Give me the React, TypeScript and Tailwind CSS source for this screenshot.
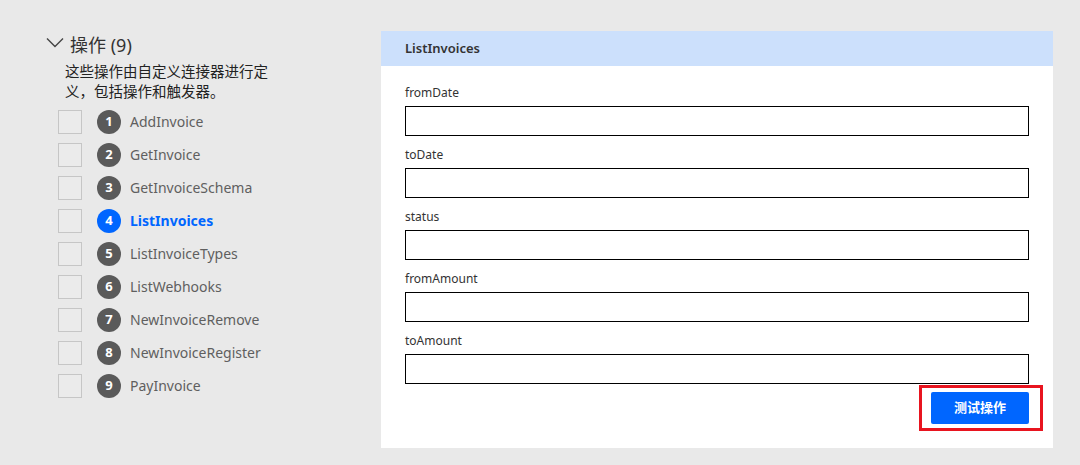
import React from "react";

const items = [
  "AddInvoice",
  "GetInvoice",
  "GetInvoiceSchema",
  "ListInvoices",
  "ListInvoiceTypes",
  "ListWebhooks",
  "NewInvoiceRemove",
  "NewInvoiceRegister",
  "PayInvoice",
];

const fields = ["fromDate", "toDate", "status", "fromAmount", "toAmount"];

const font = { fontFamily: '"Noto Sans", "Noto Sans CJK SC", sans-serif' };

export default function App() {
  return (
    <div
      className="w-[1080px] h-[465px] bg-[#e9e9e9] flex text-[#333]"
      style={font}
    >
      <div className="w-[381px] shrink-0 pl-[46px] pt-[31px]">
        <div className="flex items-center h-[28px]">
          <svg width="18" height="12" viewBox="0 0 18 12" className="mr-[6px] mt-[-4px]">
            <path d="M1 1.5 L9 9.5 L17 1.5" fill="none" stroke="#444" strokeWidth="1.4" />
          </svg>
          <span className="text-[18px] leading-[28px] text-[#333]">操作 (9)</span>
        </div>
        <div className="ml-[19px] w-[220px] text-[14.5px] leading-[20px] text-[#222] mt-[2px]">
          这些操作由自定义连接器进行定义，包括操作和触发器。
        </div>
        <div className="flex flex-col ml-[12px] mt-[4px]">
          {items.map((name, i) => {
            const active = i === 3;
            return (
              <div key={name} className="flex items-center h-[33px]">
                <div className="w-[24px] h-[24px] border border-[#c6c6c6] bg-[#ebebeb]" />
                <div
                  className={
                    "ml-[15px] w-[24px] h-[24px] rounded-full flex items-center justify-center text-white text-[13px] font-bold " +
                    (active ? "bg-[#0066ff]" : "bg-[#5a5a5a]")
                  }
                >
                  {i + 1}
                </div>
                <span
                  className={
                    "ml-[9px] text-[14px] " +
                    (active ? "text-[#0066ff] font-bold" : "text-[#5f5f5f]")
                  }
                >
                  {name}
                </span>
              </div>
            );
          })}
        </div>
      </div>
      <div className="mt-[31px] w-[672px] h-[417px] bg-white flex flex-col">
        <div className="h-[35px] bg-[#cce0fc] flex items-center px-[24px]">
          <span className="text-[13px] font-semibold text-[#333]">ListInvoices</span>
        </div>
        <div className="px-[24px] pt-[19px] flex flex-col">
          {fields.map((f) => (
            <div key={f} className="flex flex-col mb-[11px]">
              <span className="text-[12px] leading-[16px] text-[#333]">{f}</span>
              <div className="mt-[5px] h-[30px] border border-black" />
            </div>
          ))}
          <div className="flex justify-end -mt-[3px]">
            <div className="relative">
              <button className="w-[98px] h-[32px] bg-[#0066ff] rounded-[2px] text-white text-[13px] font-bold">
                测试操作
              </button>
              <div className="absolute left-[-12px] right-[-14px] top-[-7px] bottom-[-7px] border-[3px] border-[#e8141f]" />
            </div>
          </div>
        </div>
      </div>
    </div>
  );
}
